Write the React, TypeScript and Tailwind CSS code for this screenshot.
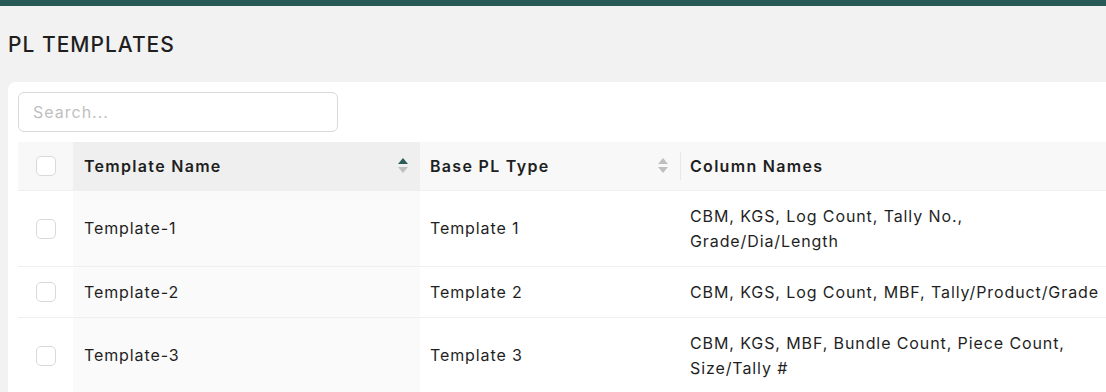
import React from 'react'

const rows = [
  { id: 1, name: 'Template-1', base: 'Template 1', columns: 'CBM, KGS, Log Count, Tally No., Grade/Dia/Length' },
  { id: 2, name: 'Template-2', base: 'Template 2', columns: 'CBM, KGS, Log Count, MBF, Tally/Product/Grade' },
  { id: 3, name: 'Template-3', base: 'Template 3', columns: 'CBM, KGS, MBF, Bundle Count, Piece Count, Size/Tally #' },
]

const SortIcon = ({ active }: { active?: boolean }) => (
  <span className="flex flex-col items-center gap-[3px]">
    <svg width="10" height="6" viewBox="0 0 10 6">
      <path d="M5 0L10 6H0z" fill={active ? '#2b5c59' : '#bfbfbf'} />
    </svg>
    <svg width="10" height="6" viewBox="0 0 10 6">
      <path d="M0 0H10L5 6z" fill="#bfbfbf" />
    </svg>
  </span>
)

const Checkbox = () => (
  <span className="block w-[20px] h-[20px] rounded-[5px] border border-[#d9d9d9] bg-white" />
)

const App = () => {
  return (
    <div
      className="w-[1106px] h-[392px] overflow-hidden bg-[#f2f2f2] text-[#1f1f1f]"
      style={{ fontFamily: 'Inter, "Open Sans", sans-serif' }}
    >
      <div className="h-[6px] bg-[#275957]" />
      <h1 className="pl-[8px] pt-[25px] h-[76px] text-[21px] font-medium tracking-[1px] leading-[28px]">
        PL TEMPLATES
      </h1>
      <div className="ml-[8px] w-[1200px] bg-white rounded-tl-[8px] px-[10px] pt-[10px] h-[400px]">
        <div className="w-[320px] h-[40px] rounded-[6px] border border-[#d9d9d9] flex items-center px-[14px] text-[16px] tracking-[1px] text-[#bfbfbf]">
          Search...
        </div>
        <table className="mt-[10px] border-collapse text-[16px] tracking-[0.9px] table-fixed w-[1180px]">
          <colgroup>
            <col className="w-[55px]" />
            <col className="w-[347px]" />
            <col className="w-[260px]" />
            <col />
          </colgroup>
          <thead>
            <tr className="h-[48px] border-b border-[#efefef] text-left">
              <th className="bg-[#f8f8f8] pl-[18px]">
                <Checkbox />
              </th>
              <th className="bg-[#efefef] px-[11px] font-semibold tracking-[1.3px]">
                <div className="flex items-center justify-between pr-[1px]">
                  <span>Template Name</span>
                  <SortIcon active />
                </div>
              </th>
              <th className="bg-[#f8f8f8] pl-[10px] pr-[12px] font-semibold tracking-[1.3px]">
                <div className="flex items-center justify-between">
                  <span>Base PL Type</span>
                  <SortIcon />
                </div>
              </th>
              <th className="bg-[#f8f8f8] px-[10px] font-semibold tracking-[1.3px] relative">
                <span className="absolute left-0 top-[10px] bottom-[10px] w-px bg-[#e8e8e8]" />
                Column Names
              </th>
            </tr>
          </thead>
          <tbody>
            {rows.map((row) => (
              <tr key={row.id} className="border-b border-[#efefef] leading-[25px]">
                <td className="pl-[18px] pt-[13px] pb-[12px]">
                  <Checkbox />
                </td>
                <td className="bg-[#fafafa] px-[11px] pt-[13px] pb-[12px]">{row.name}</td>
                <td className="px-[10px] pt-[13px] pb-[12px]">{row.base}</td>
                <td className="px-[10px] pt-[13px] pb-[12px]">
                  <div className="w-[416px]">{row.columns}</div>
                </td>
              </tr>
            ))}
          </tbody>
        </table>
      </div>
    </div>
  )
}

export default App
